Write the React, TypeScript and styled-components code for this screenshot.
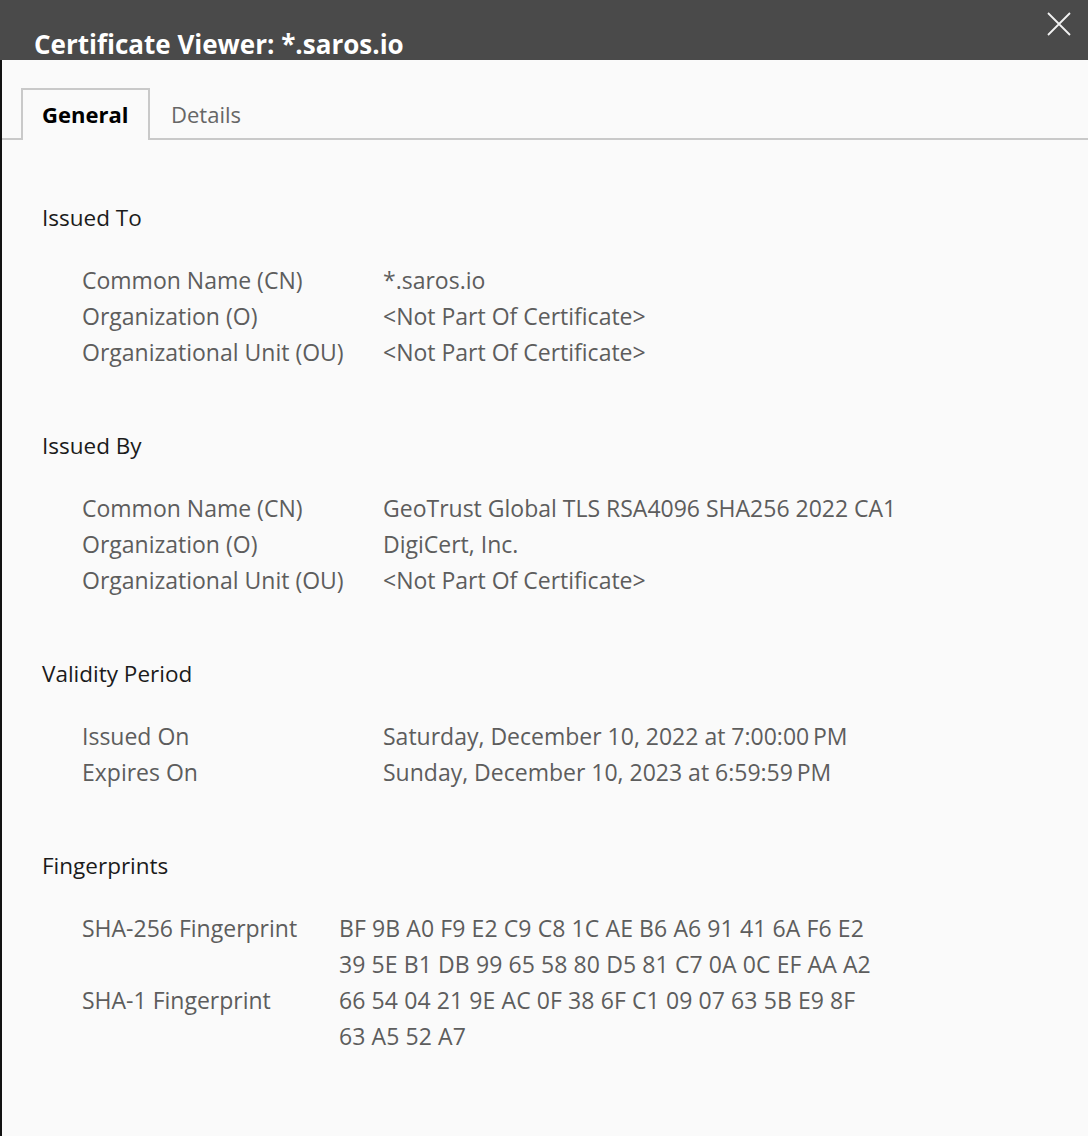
import React from "react";
import styled, { createGlobalStyle } from "styled-components";

const GlobalStyle = createGlobalStyle`
  html, body { margin: 0; padding: 0; background: #fafafa; }
  body { font-family: "Open Sans", "Noto Sans", "Liberation Sans", sans-serif; }
`;

const Window = styled.div`
  width: 1088px;
  height: 1136px;
  display: flex;
  flex-direction: column;
  background: #fafafa;
  overflow: hidden;
`;

const TitleBar = styled.header`
  height: 60px;
  flex: 0 0 60px;
  background: #4a4a4a;
  display: flex;
  justify-content: space-between;
  padding: 0 17px 0 34px;
  box-sizing: border-box;
`;

const Title = styled.h1`
  margin: 28px 0 0;
  font-size: 26px;
  line-height: 32px;
  font-weight: 700;
  color: #ffffff;
`;

const CloseButton = styled.button`
  margin-top: 12px;
  width: 24px;
  height: 24px;
  padding: 0;
  border: none;
  background: transparent;
  cursor: pointer;
  display: flex;
`;

const Body = styled.main`
  flex: 1;
  border-left: 2px solid #121212;
  display: flex;
  flex-direction: column;
`;

const TabStrip = styled.nav`
  margin-top: 28px;
  padding-left: 19px;
  display: flex;
  align-items: flex-end;
  border-bottom: 2px solid #c9c9c9;
`;

const Tab = styled.div<{ $active?: boolean }>`
  box-sizing: border-box;
  height: 52px;
  margin-bottom: -2px;
  display: flex;
  align-items: center;
  font-size: 22px;
  padding: 0 ${(p) => (p.$active ? "19px" : "0")} 2px ${(p) => (p.$active ? "19px" : "19px")};
  color: ${(p) => (p.$active ? "#000000" : "#666666")};
  font-weight: ${(p) => (p.$active ? 700 : 400)};
  background: ${(p) => (p.$active ? "#fafafa" : "transparent")};
  border: ${(p) => (p.$active ? "2px solid #c9c9c9" : "2px solid transparent")};
  border-bottom: none;
  width: ${(p) => (p.$active ? "129px" : "auto")};
`;

const Content = styled.div`
  padding: 60px 0 0 40px;
  display: flex;
  flex-direction: column;
  gap: 58px;
`;

const Section = styled.section`
  display: flex;
  flex-direction: column;
  gap: 26px;
`;

const Heading = styled.h2`
  margin: 0;
  font-size: 22.5px;
  line-height: 36px;
  font-weight: 400;
  color: #1b1b1b;
`;

const Rows = styled.div<{ $labelWidth: number }>`
  display: grid;
  grid-template-columns: ${(p) => p.$labelWidth}px 1fr;
  padding-left: 40px;
  font-size: 23px;
  line-height: 36px;
  color: #5d5d5d;
`;

const Label = styled.div`
  white-space: nowrap;
`;
const Value = styled.div<{ $mono?: boolean }>`
  white-space: pre-line;
  letter-spacing: ${(p) => (p.$mono ? "0.1px" : "0")};
`;

type Row = [string, string];
const sections: { title: string; labelWidth: number; mono?: boolean; rows: Row[] }[] = [
  {
    title: "Issued To",
    labelWidth: 301,
    rows: [
      ["Common Name (CN)", "*.saros.io"],
      ["Organization (O)", "<Not Part Of Certificate>"],
      ["Organizational Unit (OU)", "<Not Part Of Certificate>"],
    ],
  },
  {
    title: "Issued By",
    labelWidth: 301,
    rows: [
      ["Common Name (CN)", "GeoTrust Global TLS RSA4096 SHA256 2022 CA1"],
      ["Organization (O)", "DigiCert, Inc."],
      ["Organizational Unit (OU)", "<Not Part Of Certificate>"],
    ],
  },
  {
    title: "Validity Period",
    labelWidth: 301,
    rows: [
      ["Issued On", "Saturday, December 10, 2022 at 7:00:00\u2009PM"],
      ["Expires On", "Sunday, December 10, 2023 at 6:59:59\u2009PM"],
    ],
  },
  {
    title: "Fingerprints",
    labelWidth: 257,
    mono: true,
    rows: [
      [
        "SHA-256 Fingerprint",
        "BF 9B A0 F9 E2 C9 C8 1C AE B6 A6 91 41 6A F6 E2\n39 5E B1 DB 99 65 58 80 D5 81 C7 0A 0C EF AA A2",
      ],
      [
        "SHA-1 Fingerprint",
        "66 54 04 21 9E AC 0F 38 6F C1 09 07 63 5B E9 8F\n63 A5 52 A7",
      ],
    ],
  },
];

export default function App() {
  return (
    <>
      <GlobalStyle />
      <Window>
        <TitleBar>
          <Title>Certificate Viewer: *.saros.io</Title>
          <CloseButton aria-label="Close">
            <svg width="24" height="24" viewBox="0 0 24 24">
              <path d="M1 1 L23 23 M23 1 L1 23" stroke="#f2f2f2" strokeWidth="1.8" fill="none" />
            </svg>
          </CloseButton>
        </TitleBar>
        <Body>
          <TabStrip>
            <Tab $active>General</Tab>
            <Tab>Details</Tab>
          </TabStrip>
          <Content>
            {sections.map((s) => (
              <Section key={s.title}>
                <Heading>{s.title}</Heading>
                <Rows $labelWidth={s.labelWidth}>
                  {s.rows.map(([l, v]) => (
                    <React.Fragment key={l}>
                      <Label>{l}</Label>
                      <Value $mono={s.mono}>{v}</Value>
                    </React.Fragment>
                  ))}
                </Rows>
              </Section>
            ))}
          </Content>
        </Body>
      </Window>
    </>
  );
}
